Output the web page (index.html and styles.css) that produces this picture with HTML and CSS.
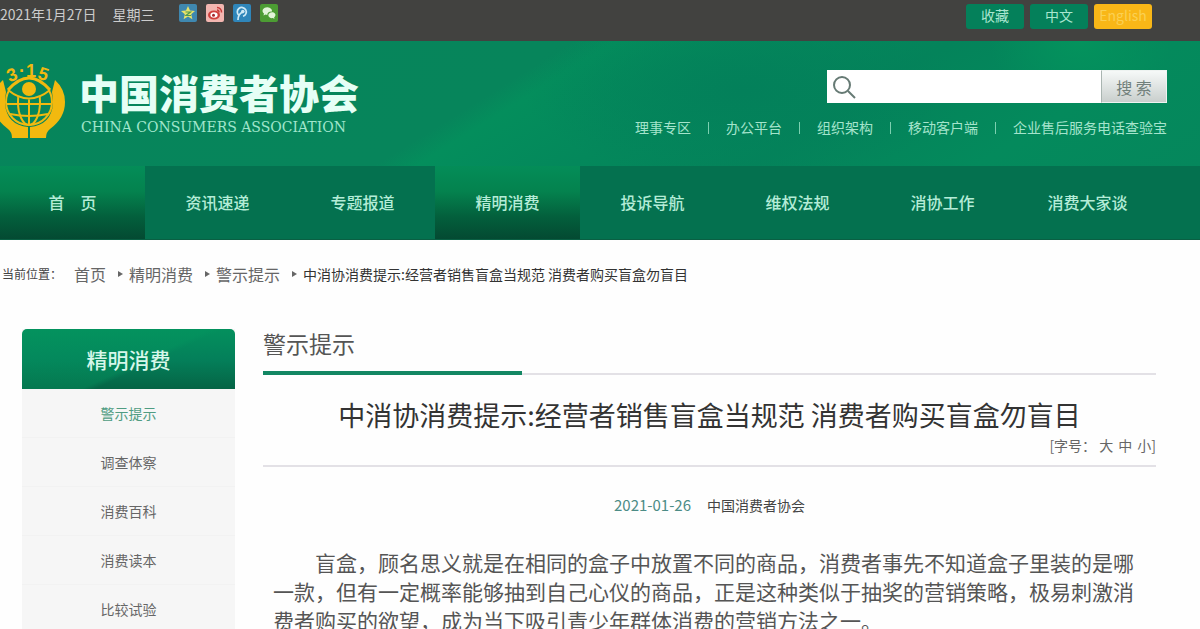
FILE: index.html
```html
<!DOCTYPE html>
<html lang="zh-CN">
<head>
    <meta charset="UTF-8">
    <meta name="viewport" content="width=device-width, initial-scale=1.0">
    <title>中国消费者协会</title>
    <link rel="stylesheet" href="styles.css">
</head>
<body>
    <div class="topbar">
        <span>2021年1月27日</span>
        <span>星期三</span>
        <div class="share">
            <a href="#" aria-label="QQ空间">
                <svg viewBox="0 0 18 18">
                    <rect width="18" height="18" rx="2" fill="#3f88b0"/>
                    <path d="M9 2l2 4.600 5 .4-3.800 3.300 1.200 5L9 12.600 4.600 15.300l1.200-5L2 7l5-.4z" fill="#e8e36a"/>
                    <path d="M6.500 8h5l-4.500 3.500h5" fill="none" stroke="#4f9a50" stroke-width="1.200"/>
                </svg>
            </a>
            <a href="#" aria-label="新浪微博">
                <svg viewBox="0 0 18 18">
                    <rect width="18" height="18" rx="2" fill="#f3b6b0"/>
                    <ellipse cx="8" cy="11" rx="6" ry="4.500" fill="#d0403c"/>
                    <ellipse cx="8" cy="11" rx="3.600" ry="2.800" fill="#fff"/>
                    <circle cx="7.500" cy="11.300" r="1.500" fill="#a8282c"/>
                    <path d="M11 3.500a4.500 4.500 0 0 1 4.500 5M11 6a2 2 0 0 1 2 2.300" fill="none" stroke="#c83a38" stroke-width="1.500"/>
                </svg>
            </a>
            <a href="#" aria-label="腾讯微博">
                <svg viewBox="0 0 18 18">
                    <rect width="18" height="18" rx="2" fill="#2f86ba"/>
                    <path d="M6 11.500a4.500 4.500 0 1 1 4 .8M5 16c0-4 1.500-6.500 4.500-8" fill="none" stroke="#cfeaf6" stroke-width="1.700"/>
                    <circle cx="9.800" cy="7.600" r="1.800" fill="#cfeaf6"/>
                </svg>
            </a>
            <a href="#" aria-label="微信">
                <svg viewBox="0 0 18 18">
                    <rect width="18" height="18" rx="2" fill="#4c9c33"/>
                    <path d="M3.500 11.500l.5-2C.5 6.500 4 3 7.500 3.200c3 .2 4.800 2.300 4.500 4.300-3-.2-5 1.500-4.700 3.500l-1.800-.4z" fill="#e2f4d8"/>
                    <path d="M14.500 15l-.4-1.500c3-2.500.6-5.300-2.100-5.200-3.200.1-4.800 3.200-2.600 5 1 .9 2.300 1 3.500.8z" fill="#e2f4d8"/>
                </svg>
            </a>
        </div>
        <div class="tools">
            <button type="button">收藏</button>
            <button type="button">中文</button>
            <button type="button" class="english">English</button>
        </div>
    </div>

    <header class="header">
        <a href="#" class="brand">
            <svg class="logo" viewBox="0 0 66 78">
                <g fill="none" stroke="#f2b90f" stroke-width="2">
                    <circle cx="29" cy="40" r="23"/>
                    <ellipse cx="29" cy="40" rx="11" ry="23"/>
                    <path d="M29 34v28M6 42h46M10 52q19 4 38 0"/>
                </g>
                <!-- eye -->
                <path d="M8 28q21-24 42 0-21 19-42 0z" fill="#07855b"/>
                <path d="M8 28q21-24 42 0" fill="none" stroke="#f2b90f" stroke-width="3"/>
                <path d="M8 28q21 17 42 0" fill="none" stroke="#f2b90f" stroke-width="2"/>
                <circle cx="29" cy="27" r="7" fill="#f2b90f"/>
                <!-- hands -->
                <path d="M55 18q10 9 10 22 0 16-15 27-4 3-4 9H30V65q21-2 23-23 0-7-1-12z" fill="#f2b90f"/>
                <path d="M3 18q-10 9-10 22 0 16 15 27 4 3 4 9h16V65Q7 63 5 42q0-7 1-12z" fill="#f2b90f"/>
                <g class="logo-text">
                    <text x="7" y="19" transform="rotate(-20 12 13)">3</text>
                    <text x="19" y="15">·</text>
                    <text x="26" y="15">1</text>
                    <text x="38" y="18" transform="rotate(18 43 13)">5</text>
                </g>
            </svg>
            <div>
                <div class="brand-cn">中国消费者协会</div>
                <div class="brand-en">CHINA CONSUMERS ASSOCIATION</div>
            </div>
        </a>
        <div class="header-right">
            <form class="search" role="search">
                <svg viewBox="0 0 24 24">
                    <circle cx="10" cy="10" r="8"/>
                    <path d="M16 16l7 7"/>
                </svg>
                <input type="text" aria-label="搜索">
                <button type="submit">搜 索</button>
            </form>
            <div class="quick-links">
                <a href="#">理事专区</a>
                <a href="#">办公平台</a>
                <a href="#">组织架构</a>
                <a href="#">移动客户端</a>
                <a href="#">企业售后服务电话查验宝</a>
            </div>
        </div>
    </header>

    <nav class="nav">
        <a href="#" class="active">首&emsp;页</a>
        <a href="#">资讯速递</a>
        <a href="#">专题报道</a>
        <a href="#" class="active">精明消费</a>
        <a href="#">投诉导航</a>
        <a href="#">维权法规</a>
        <a href="#">消协工作</a>
        <a href="#">消费大家谈</a>
    </nav>

    <div class="breadcrumb">
        <span class="label">当前位置：</span>
        <a href="#">首页</a>
        <i></i>
        <a href="#">精明消费</a>
        <i></i>
        <a href="#">警示提示</a>
        <i></i>
        <span class="current">中消协消费提示:经营者销售盲盒当规范 消费者购买盲盒勿盲目</span>
    </div>

    <div class="content">
        <aside class="sidebar">
            <h2>精明消费</h2>
            <ul>
                <li><a href="#" class="on">警示提示</a></li>
                <li><a href="#">调查体察</a></li>
                <li><a href="#">消费百科</a></li>
                <li><a href="#">消费读本</a></li>
                <li><a href="#">比较试验</a></li>
            </ul>
        </aside>

        <main class="main">
            <h3 class="section-title"><span>警示提示</span></h3>
            <div class="article-head">
                <h1>中消协消费提示:经营者销售盲盒当规范 消费者购买盲盒勿盲目</h1>
                <div class="font-size">[字号： <a href="#">大</a><a href="#">中</a><a href="#">小</a>]</div>
            </div>
            <div class="meta">
                <span class="date">2021-01-26</span>
                <span>中国消费者协会</span>
            </div>
            <p class="text">盲盒，顾名思义就是在相同的盒子中放置不同的商品，消费者事先不知道盒子里装的是哪一款，但有一定概率能够抽到自己心仪的商品，正是这种类似于抽奖的营销策略，极易刺激消费者购买的欲望，成为当下吸引青少年群体消费的营销方法之一。</p>
        </main>
    </div>
</body>
</html>
```

FILE: styles.css
```css
* {
    margin: 0;
    padding: 0;
    box-sizing: border-box;
}

body {
    font-family: "Noto Sans CJK SC", sans-serif;
    font-size: 14px;
    line-height: 20px;
    color: #444;
    background: #fefefe;
}

a {
    color: inherit;
    text-decoration: none;
}

button, input {
    font-family: inherit;
    font-size: 14px;
    border: none;
    outline: none;
}

button {
    cursor: pointer;
}

/* top bar */
.topbar {
    display: flex;
    align-items: flex-start;
    gap: 16px;
    height: 41px;
    padding: 4px 48px 0 0;
    background: #424240;
    color: #ccc;
    white-space: nowrap;
}

.share {
    display: flex;
    gap: 9px;
    margin-left: 9px;
}

.share svg {
    display: block;
    width: 18px;
    height: 18px;
}

.tools {
    display: flex;
    gap: 6px;
    margin-left: auto;
}

.tools button {
    width: 58px;
    height: 25px;
    padding-bottom: 4px;
    border-radius: 3px;
    background: #04805a;
    color: #a8e6cf;
}

.tools .english {
    background: #f9b717;
    color: #fbd052;
}

/* header */
.header {
    display: flex;
    justify-content: space-between;
    height: 125px;
    padding-right: 33px;
    background:
        radial-gradient(ellipse 90px 70px at 90% 0, rgba(4, 148, 93, 0.9), rgba(4, 148, 93, 0)),
        radial-gradient(ellipse 220px 90px at 62% 40%, #03805a, rgba(3, 128, 90, 0)),
        linear-gradient(148deg, #06855b 0%, #07855b 41%, #048e5c 44%, #04885b 55%, #04835a 68%, #048a5c 84%, #05875c 100%);
}

.brand {
    display: flex;
    align-items: flex-start;
    gap: 13px;
    padding-top: 21px;
}

.logo {
    width: 66px;
    height: 78px;
}

.logo-text {
    fill: #f2b90f;
    font: bold 18px "Liberation Sans", sans-serif;
}

.brand-cn {
    padding-top: 8px;
    font-size: 40px;
    font-weight: 900;
    line-height: 44px;
    color: #e6fff6;
}

.brand-en {
    padding: 3px 0 0 2px;
    font-family: "DejaVu Serif", serif;
    font-size: 14px;
    color: #a0e6cc;
}

.header-right {
    display: flex;
    flex-direction: column;
    align-items: flex-end;
    padding-top: 29px;
}

.search {
    display: flex;
    align-items: center;
    width: 340px;
    height: 33px;
    background: #fff;
}

.search svg {
    flex-shrink: 0;
    width: 24px;
    height: 24px;
    margin-left: 5px;
    fill: none;
    stroke: #667a74;
    stroke-width: 2;
}

.search input {
    flex: 1;
    min-width: 0;
    height: 100%;
    padding: 0 6px;
    background: none;
}

.search button {
    width: 66px;
    height: 100%;
    border: 1px solid #eef3f1;
    border-left-color: #a9b5b1;
    background: linear-gradient(#f6f9f8, #c9cfcd);
    font-size: 16px;
    color: #71807b;
}

.quick-links {
    display: flex;
    align-items: center;
    padding-top: 14px;
    color: #a4e4cc;
    white-space: nowrap;
}

.quick-links a + a::before {
    content: "";
    display: inline-block;
    width: 1px;
    height: 12px;
    margin: 0 17px;
    background: #7cd0b0;
    vertical-align: -1px;
}

/* main nav */
.nav {
    display: grid;
    grid-template-columns: repeat(8, 1fr);
    padding-right: 40px;
    background: #04714f;
    border-bottom: 1px solid #0a5f43;
}

.nav a {
    font-size: 16px;
    font-weight: 500;
    line-height: 73px;
    text-align: center;
    color: #b4ecd7;
}

.nav .active {
    background: linear-gradient(#048d58 0%, #04824e 35%, #035f3c 70%, #044a32 100%);
}

/* breadcrumb */
.breadcrumb {
    display: flex;
    align-items: center;
    padding: 24px 0 0 2px;
    white-space: nowrap;
}

.breadcrumb .label {
    margin-right: 12px;
    font-size: 12px;
}

.breadcrumb a {
    font-size: 16px;
    color: #666;
}

.breadcrumb i {
    margin: 0 6px 0 12px;
    border: 3px solid transparent;
    border-left: 5px solid #666;
    border-right: 0;
}

.breadcrumb .current {
    color: #333;
}

/* content */
.content {
    display: flex;
    align-items: flex-start;
    gap: 28px;
    padding: 45px 44px 0 22px;
}

.sidebar {
    flex-shrink: 0;
    width: 213px;
    background: #f6f6f6;
    text-align: center;
}

.sidebar h2 {
    border-radius: 5px 5px 0 0;
    background:
        linear-gradient(155deg, rgba(4, 150, 95, 0.4) 55%, rgba(3, 110, 75, 0) 59%),
        linear-gradient(#04905d, #04805a 50%, #056445);
    font-size: 21px;
    font-weight: 500;
    line-height: 60px;
    color: #d6f7ea;
}

.sidebar ul {
    list-style: none;
}

.sidebar a {
    display: block;
    line-height: 48px;
    border-bottom: 1px solid #f2f2f2;
    color: #666;
}

.sidebar .on {
    color: #4f9c82;
}

.main {
    flex: 1;
    min-width: 0;
}

.section-title {
    border-bottom: 2px solid #e3e1e6;
    font-size: 23px;
    font-weight: 400;
    line-height: 28px;
    color: #555;
}

.section-title span {
    display: block;
    width: 29%;
    height: 46px;
    margin-bottom: -2px;
    border-bottom: 4px solid #138763;
}

.article-head {
    padding: 20px 0 10px;
    border-bottom: 2px solid #e3e1e6;
}

.article-head h1 {
    font-size: 27px;
    font-weight: 400;
    line-height: 40px;
    text-align: center;
    color: #333;
}

.font-size {
    text-align: right;
    color: #666;
}

.font-size a + a {
    margin-left: 5px;
}

.meta {
    display: flex;
    justify-content: center;
    gap: 16px;
    padding-top: 28px;
}

.meta .date {
    font-size: 15px;
    color: #4c8c86;
}

.text {
    padding: 33px 22px 20px 10px;
    font-size: 21px;
    line-height: 29px;
    text-indent: 2em;
    color: #555;
}
```
